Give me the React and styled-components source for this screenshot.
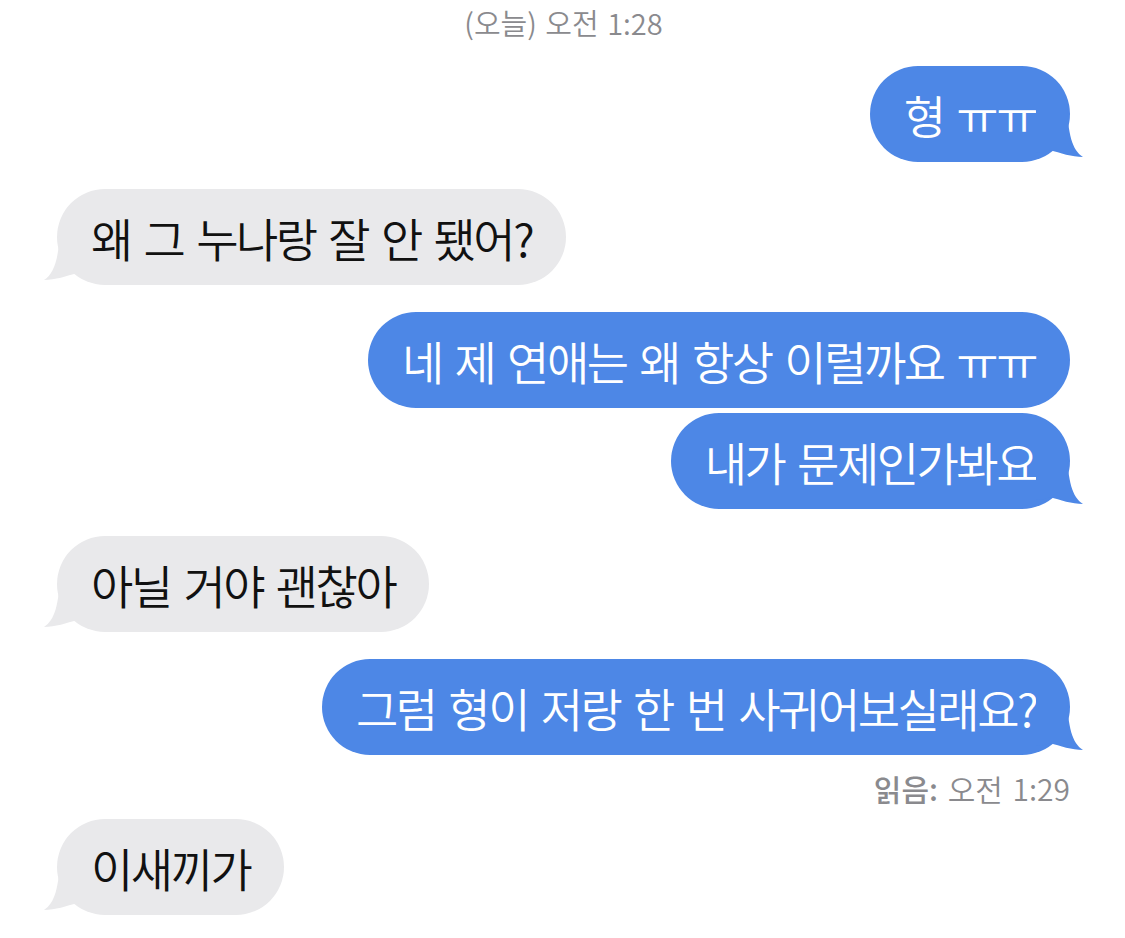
import React from "react";
import styled, { createGlobalStyle } from "styled-components";

const GlobalStyle = createGlobalStyle`
  html, body {
    margin: 0;
    padding: 0;
    background: #fff;
  }
  body {
    font-family: "Noto Sans CJK KR", "Noto Sans", sans-serif;
    -webkit-font-smoothing: antialiased;
  }
`;

const Screen = styled.div`
  width: 1125px;
  height: 938px;
  box-sizing: border-box;
  overflow: hidden;
  padding: 0 55px 0 57px;
  display: flex;
  flex-direction: column;
`;

const Timestamp = styled.div`
  text-align: center;
  font-size: 29px;
  font-weight: 350;
  line-height: 44px;
  word-spacing: 2px;
  color: #8a8a8e;
  margin-bottom: 22px;
`;

const Row = styled.div`
  display: flex;
  justify-content: ${props => props.mine ? "flex-end" : "flex-start"};
  margin-top: ${props => props.gap}px;
`;

const Bubble = styled.div`
  position: relative;
  height: 96px;
  box-sizing: border-box;
  padding: 0 34px;
  border-radius: 48px;
  display: flex;
  align-items: center;
  font-size: 46px;
  font-weight: 350;
  letter-spacing: -2.5px;
  word-spacing: 5px;
  white-space: nowrap;
  background: ${props => props.mine ? "#4d87e6" : "#e9e9eb"};
  color: ${props => props.mine ? "#fff" : "#111"};
`;

const TailSvg = styled.svg`
  position: absolute;
  bottom: 3px;
  width: 50px;
  height: 55px;
  ${props => props.mine
    ? "right: -16px;"
    : "left: -16px; transform: scaleX(-1);"}
`;

const Receipt = styled.div`
  text-align: right;
  font-size: 30px;
  font-weight: 350;
  line-height: 40px;
  word-spacing: 3px;
  color: #8a8a8e;
  margin: 13px 0 11px 0;
  b {
    font-weight: 500;
  }
`;

function Tail({ mine }) {
  return (
    <TailSvg mine={mine} viewBox="0 0 50 55">
      <path
        d="M0 0 H31 C32 30 36 46 47 53 C36 53 24 49 14 46 C10 48 4 49 0 49 Z"
        fill={mine ? "#4d87e6" : "#e9e9eb"}
      />
    </TailSvg>
  );
}

function Message({ mine, tail, gap = 27, children }) {
  return (
    <Row mine={mine} gap={gap}>
      <Bubble mine={mine}>
        {tail && <Tail mine={mine} />}
        <span>{children}</span>
      </Bubble>
    </Row>
  );
}

export default function App() {
  return (
    <>
      <GlobalStyle />
      <Screen>
        <Timestamp>(오늘) 오전 1:28</Timestamp>
        <Message mine tail gap={0}>형 ㅠㅠ</Message>
        <Message tail>왜 그 누나랑 잘 안 됐어?</Message>
        <Message mine>네 제 연애는 왜 항상 이럴까요 ㅠㅠ</Message>
        <Message mine tail gap={5}>내가 문제인가봐요</Message>
        <Message tail>아닐 거야 괜찮아</Message>
        <Message mine tail>그럼 형이 저랑 한 번 사귀어보실래요?</Message>
        <Receipt><b>읽음:</b> 오전 1:29</Receipt>
        <Message tail gap={0}>이새끼가</Message>
      </Screen>
    </>
  );
}
